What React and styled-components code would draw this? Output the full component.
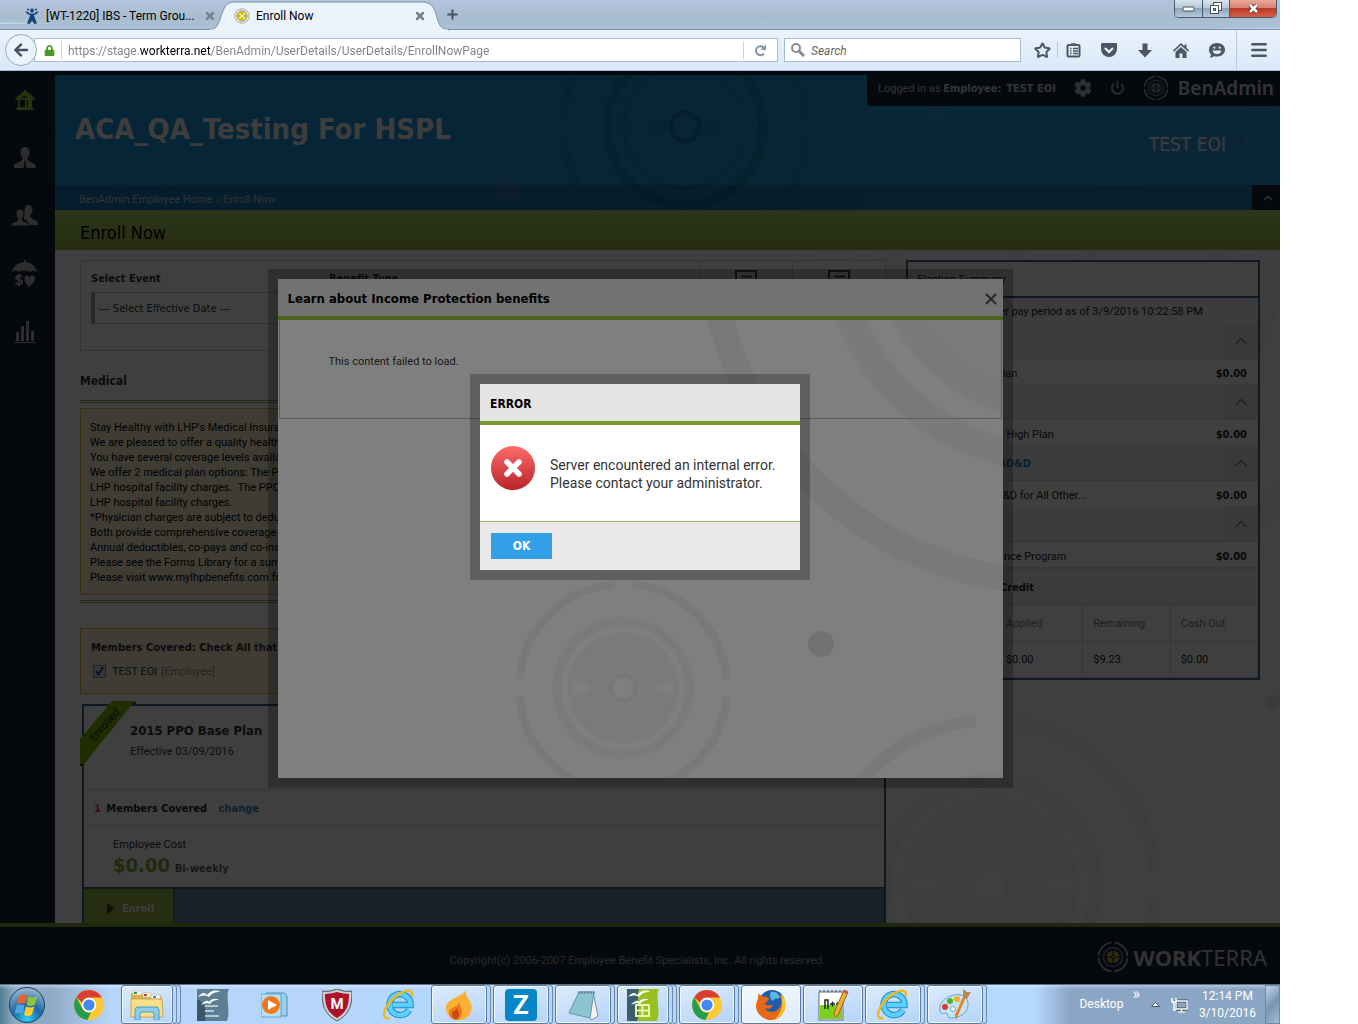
import styled, { createGlobalStyle, css } from "styled-components";
import { ChevronUp, Star, X, Plus, Menu, Power } from "lucide-react";
import { FaCog, FaArrowLeft, FaLock } from "react-icons/fa";

const textFont = `Roboto, "Noto Sans", sans-serif`;
const boldFont = `"DejaVu Sans Condensed", "Noto Sans", sans-serif`;

const GlobalStyle = createGlobalStyle`
  *, *::before, *::after { box-sizing: border-box; }
  body { margin: 0; background: #fff; font: 11px/15px ${textFont}; color: #333; }
  h1, h2, h3, p { margin: 0; font-size: inherit; }
  b, strong { font-family: ${boldFont}; }
  button, input, select { font: inherit; color: inherit; margin: 0; }
  button { border: 0; padding: 0; background: none; cursor: pointer; }
  a { color: inherit; text-decoration: none; }
  svg { display: block; flex: none; }
`;

/* ---------- artwork ---------- */

const Target = ({ cx, cy, r }) => {
  const ring = r * 0.963;
  const arc = ring * Math.PI * 0.5;
  const gap = r * 0.17;
  return (
    <g transform={`translate(${cx} ${cy})`} fill="none" stroke="#000">
      <circle
        r={ring}
        strokeWidth={r * 0.074}
        strokeOpacity="0.05"
        strokeDasharray={`${arc - gap} ${gap}`}
        strokeDashoffset={-gap / 2}
      />
      <circle r={r * 0.615} strokeWidth={r * 0.082} strokeOpacity="0.04" />
      <circle r={r * 0.47} strokeWidth={r * 0.085} strokeOpacity="0.045" />
      <circle r={r * 0.27} strokeWidth={r * 0.32} strokeOpacity="0.03" />
      <circle r={r * 0.11} strokeWidth={r * 0.045} strokeOpacity="0.04" />
      <g stroke="none" fill="#fff">
        <rect x={-r * 0.466} y={-r * 0.037} width={r * 0.15} height={r * 0.074} fillOpacity="0.8" />
        <rect x={r * 0.33} y={-r * 0.037} width={r * 0.15} height={r * 0.074} fillOpacity="0.8" />
        <rect x={-r * 0.04} y={-r * 0.66} width={r * 0.08} height={r * 0.53} fillOpacity="0.3" />
        <rect x={-r * 0.04} y={r * 0.13} width={r * 0.08} height={r * 0.53} fillOpacity="0.3" />
      </g>
    </g>
  );
};

const Artwork = ({ x, y, opacity }) => (
  <ArtSvg viewBox={`${x} ${y} 1280 1024`} opacity={opacity} aria-hidden="true">
    <Target cx={1055} cy={238} r={357} />
    <Target cx={990} cy={886} r={172} />
    <Target cx={623} cy={688} r={108} />
    <circle cx="821" cy="644" r="13" fillOpacity="0.1" />
    <circle cx="1273" cy="702" r="7" fillOpacity="0.1" />
  </ArtSvg>
);

const HeaderArt = () => (
  <ArtSvg viewBox="55 75 1280 1024" aria-hidden="true">
    <g fill="none" stroke="#000">
      <circle cx="685" cy="127" r="14" strokeWidth="5" strokeOpacity="0.18" />
      <circle cx="685" cy="127" r="61" strokeWidth="5" strokeOpacity="0.05" />
      <circle cx="685" cy="127" r="78" strokeWidth="10" strokeOpacity="0.12" />
      <circle
        cx="685"
        cy="127"
        r="122"
        strokeWidth="9"
        strokeOpacity="0.05"
        strokeDasharray="172 20"
        strokeDashoffset="-10"
      />
      <path d="M646 127h22M702 127h24" strokeWidth="8" strokeOpacity="0.06" />
    </g>
    <g fill="#fff" fillOpacity="0.06">
      <circle cx="373" cy="102" r="7" />
      <circle cx="228" cy="160" r="7" />
      <circle cx="937" cy="109" r="13" />
      <circle cx="508" cy="190" r="13" fill="#ffb070" fillOpacity="0.12" />
    </g>
  </ArtSvg>
);

const ArtSvg = styled.svg`
  position: absolute;
  top: 0;
  left: 0;
  width: 1280px;
  height: 1024px;
`;

const LogoMark = ({ size, core }) => (
  <svg width={size} height={size} viewBox="0 0 32 32" fill="none" stroke="#b8bcc0">
    <circle cx="16" cy="16" r="14.5" strokeWidth="1.6" strokeDasharray="19.8 3" strokeDashoffset="-1.5" />
    <circle cx="16" cy="16" r="9.5" strokeWidth="1.4" strokeOpacity="0.7" />
    <circle cx="16" cy="16" r="6.5" fill={core} stroke="none" />
    <path d="M16 9v5M16 18v5M9 16h5M18 16h5" stroke="#1a2430" strokeWidth="1.2" />
    <circle cx="16" cy="16" r="1.600" stroke="#1a2430" />
  </svg>
);

/* ---------- browser chrome ---------- */

const Desktop = styled.div`
  display: flex;
  flex-direction: column;
  height: 100vh;
  margin-right: 78px;
  overflow: hidden;
`;

const TabStrip = styled.div`
  display: flex;
  height: 30px;
  background: radial-gradient(ellipse at 0 80%, #c9e6f6 0, transparent 60px),
    radial-gradient(ellipse at 100% 100%, #c4e2f2 0, transparent 80px),
    linear-gradient(#b3c5dd, #a8bccf 60%, #adc1d6);
  border-bottom: 1px solid #7890a8;
  font: 12px/16px ${textFont};
  color: #000;
`;

const Tab = styled.div`
  position: relative;
  display: flex;
  align-items: center;
  gap: 6px;
  width: ${(p) => (p.$active ? 212 : 224)}px;
  height: 31px;
  padding: ${(p) => (p.$active ? "0 10px 0 10px" : "0 8px 0 24px")};
`;

const TabShape = styled.svg`
  position: absolute;
  top: 0;
  left: -14px;
`;

const TabTitle = styled.span`
  position: relative;
  flex: 1;
  white-space: nowrap;
`;

const TabButton = styled.button`
  position: relative;
  color: #76838f;
`;

const NewTab = styled.button`
  margin-left: 9px;
  color: #45515e;
`;

const WindowControls = styled.div`
  display: flex;
  height: 18px;
  margin: 0 3px 0 auto;
  border: 1px solid #4a5a6c;
  border-top: 0;
  border-radius: 0 0 5px 5px;
  overflow: hidden;
`;

const WindowButton = styled.button`
  display: grid;
  place-items: center;
  width: ${(p) => (p.$close ? 47 : 27)}px;
  background: ${(p) =>
    p.$close
      ? "linear-gradient(#e9a99b 0, #d88373 45%, #bb3a22 50%, #d4604a)"
      : "linear-gradient(#d8e3ee 0, #b8c9da 45%, #8fa6bd 50%, #b3c9dd)"};
  & + & {
    border-left: 1px solid #4a5a6c;
  }
`;

const NavBar = styled.div`
  display: flex;
  align-items: center;
  height: 41px;
  padding: 0 11px 0 5px;
  background: linear-gradient(#eaf3fc, #dae8f8);
  border-bottom: 1px solid #a4bcd0;
  font: 12px/16px ${textFont};
`;

const BackButton = styled.button`
  position: relative;
  display: grid;
  place-items: center;
  width: 32px;
  height: 32px;
  margin-right: -3px;
  border: 1px solid #98abbe;
  border-radius: 50%;
  background: #eaf3fc;
  color: #45505c;
`;

const FieldBox = styled.div`
  display: flex;
  align-items: center;
  gap: 6px;
  flex: ${(p) => (p.$grow ? "1" : "0 0 237px")};
  height: 24px;
  margin-right: 6px;
  padding: 0 ${(p) => (p.$grow ? "10px 0 9px" : "6px")};
  border: 1px solid #a8bccf;
  background: #fff;
  color: #8c98a6;
`;

const FieldRule = styled.span`
  width: 1px;
  height: 18px;
  margin-right: ${(p) => (p.$wide ? 4 : 0)}px;
  background: #ccd3da;
`;

// host name is darker than the rest of the address
const AddressInput = styled.input`
  flex: 1;
  min-width: 0;
  padding: 2px 0 0;
  border: 0;
  outline: 0;
  background: linear-gradient(90deg, #808080 71px, #000 71px, #000 143px, #808080 143px);
  background-clip: text;
  -webkit-text-fill-color: transparent;
`;

const SearchInput = styled.input`
  flex: 1;
  min-width: 0;
  padding: 2px 0 0;
  border: 0;
  outline: 0;
  &::placeholder {
    color: #666;
    opacity: 1;
    font-style: italic;
  }
`;

const ToolGroup = styled.div`
  display: flex;
  align-items: center;
  gap: 16px;
  margin-left: 5px;
  color: #4d5763;
`;

const ToolButton = styled.button`
  display: grid;
  place-items: center;
  width: 20px;
  height: 24px;
`;

const ToolRule = styled.span`
  width: 1px;
  height: ${(p) => p.$h}px;
  margin: ${(p) => p.$m};
  background: #b7c8da;
`;

const BrowserChrome = () => (
  <header>
    <TabStrip>
      <Tab>
        <svg width="16" height="16" viewBox="0 0 16 16" fill="#17457a">
          <circle cx="8" cy="2.6" r="2" />
          <circle cx="4.2" cy="1.6" r="1" />
          <circle cx="11.8" cy="1.6" r="1" />
          <path d="M1.6 3.2c.8 2.6 2.7 3.6 4.6 3.9L3 15.7h3l2-3 2 3h3L9.800 7.100c1.900-.3 3.800-1.300 4.600-3.900l-2 .2C11.400 5 9.700 5.600 8 5.600S4.600 5 3.600 3.400z" />
        </svg>
        <TabTitle>[WT-1220] IBS - Term Grou...</TabTitle>
        <TabButton aria-label="Close tab">
          <X size={12} strokeWidth={5} />
        </TabButton>
      </Tab>
      <Tab $active>
        <TabShape width="240" height="31" viewBox="0 0 240 31">
          <path
            d="M0 29.500C14 29.500 8 2 24 2H212C232 2 222 29.500 238 29.500V31H0z"
            fill="#ebf3fc"
            stroke="#7890a8"
          />
          <path d="M0 30.500H238" stroke="#ebf3fc" strokeWidth="2" />
        </TabShape>
        <svg width="16" height="16" viewBox="0 0 16 16" style={{ position: "relative" }}>
          <circle cx="8" cy="8" r="7.200" fill="#eee" stroke="#aaa" />
          <circle cx="8" cy="8" r="5" fill="#f0e22a" stroke="#888" />
          <path d="M8 4v8M4 8h8" stroke="#8a7f20" />
          <circle cx="8" cy="8" r="1.800" fill="#fff6a0" />
        </svg>
        <TabTitle>Enroll Now</TabTitle>
        <TabButton aria-label="Close tab">
          <X size={12} strokeWidth={5} />
        </TabButton>
      </Tab>
      <NewTab aria-label="New tab">
        <Plus size={15} strokeWidth={3} />
      </NewTab>
      <WindowControls>
        <WindowButton aria-label="Minimize">
          <svg width="13" height="6">
            <rect x="1" y="1" width="11" height="4" rx="1" fill="#fff" stroke="#48525e" />
          </svg>
        </WindowButton>
        <WindowButton aria-label="Restore">
          <svg width="12" height="13" fill="#fff" stroke="#48525e">
            <rect x="3.500" y="0.500" width="8" height="8" />
            <rect x="0.500" y="3.500" width="8" height="8" />
            <rect x="3.500" y="6.500" width="2" height="2" fill="#8fa6bd" />
          </svg>
        </WindowButton>
        <WindowButton $close aria-label="Close">
          <svg width="13" height="11" fill="none">
            <path d="M3 2l7 7M10 2L3 9" stroke="#553038" strokeWidth="4.500" />
            <path d="M3 2l7 7M10 2L3 9" stroke="#fff" strokeWidth="2.600" />
          </svg>
        </WindowButton>
      </WindowControls>
    </TabStrip>
    <NavBar>
      <BackButton aria-label="Back">
        <FaArrowLeft size={16} />
      </BackButton>
      <FieldBox $grow>
        <FaLock size={11} color="#4a9a26" />
        <FieldRule />
        <AddressInput
          aria-label="Address"
          defaultValue="https://stage.workterra.net/BenAdmin/UserDetails/UserDetails/EnrollNowPage"
        />
        <FieldRule $wide />
        <svg width="13" height="13" viewBox="0 0 13 13" fill="none" stroke="#8796a8" strokeWidth="2">
          <path d="M10 9.500A4.500 4.500 0 1 1 9.500 3.300" />
          <path d="M12 0.500V6H6.500z" fill="#8796a8" stroke="none" />
        </svg>
      </FieldBox>
      <FieldBox>
        <svg width="14" height="14" viewBox="0 0 14 14" fill="none" stroke="#8b8b8b">
          <circle cx="5" cy="5" r="4" strokeWidth="2" />
          <path d="M8 8l5 5" strokeWidth="3" />
        </svg>
        <SearchInput aria-label="Search" placeholder="Search" />
      </FieldBox>
      <ToolGroup>
        <ToolButton aria-label="Bookmark">
          <Star size={17} strokeWidth={2.800} />
        </ToolButton>
        <ToolRule $h={16} $m="0 -11px 0 -11px" />
        <ToolButton aria-label="Bookmarks list">
          <svg width="15" height="16" viewBox="0 0 15 16" fill="none" stroke="#4d5763" strokeWidth="2">
            <rect x="1.500" y="3" width="12" height="11.500" rx="1" />
            <path d="M5 2h5M4 6.500h1.500M7 6.500h5M4 9h1.500M7 9h5M4 11.500h1.500M7 11.500h5" strokeWidth="1.500" />
          </svg>
        </ToolButton>
        <ToolButton aria-label="Pocket">
          <svg width="16" height="14" viewBox="0 0 16 14">
            <path d="M1 0h14a1 1 0 0 1 1 1v5a8 8 0 0 1-16 0V1a1 1 0 0 1 1-1z" fill="#4d5763" />
            <path d="M4 5l4 4 4-4" fill="none" stroke="#fff" strokeWidth="2" />
          </svg>
        </ToolButton>
        <ToolButton aria-label="Downloads">
          <svg width="14" height="15" viewBox="0 0 14 15" fill="#4d5763">
            <path d="M4.500 0.500h5V7H14l-7 7.500L0 7h4.500z" />
          </svg>
        </ToolButton>
        <ToolButton aria-label="Home">
          <svg width="16" height="15" viewBox="0 0 16 15" fill="#4d5763">
            <path d="M8 0L0 7.500l1 1.200L8 2.300l7 6.400 1-1.200-2.500-2.400V1.500h-2v1.700z" />
            <path d="M8 4L2.500 9v6h4v-4.500h3V15h4V9z" />
          </svg>
        </ToolButton>
        <ToolButton aria-label="Chat">
          <svg width="16" height="15" viewBox="0 0 16 15">
            <path d="M8 0c4.600 0 8 2.800 8 6.700s-3.400 6.800-8 6.800c-1 0-1.800-.1-2.600-.3L1 15l1-3.500C.7 10.300 0 8.700 0 6.700 0 2.800 3.400 0 8 0z" fill="#4d5763" />
            <circle cx="5.300" cy="4.700" r="1.100" fill="#e4eefa" />
            <circle cx="10.700" cy="4.700" r="1.100" fill="#e4eefa" />
            <path d="M3.500 7.500h9c-.5 2.500-2.200 3.500-4.500 3.500s-4-1-4.500-3.500z" fill="#e4eefa" />
          </svg>
        </ToolButton>
        <ToolRule $h={38} $m="0 -4px 0 -7px" />
        <ToolButton aria-label="Menu">
          <Menu size={20} strokeWidth={3} />
        </ToolButton>
      </ToolGroup>
    </NavBar>
  </header>
);

/* ---------- application page ---------- */

const Viewport = styled.div`
  position: relative;
  display: flex;
  flex-direction: column;
  flex: 1;
  min-height: 0;
  background: #14243a;
`;

const PageBody = styled.div`
  display: flex;
  flex: 1;
  min-height: 0;
  overflow: hidden;
`;

const SideNav = styled.nav`
  width: 55px;
  background: #14243a;
`;

const SideLink = styled.a`
  display: grid;
  place-items: center;
  height: 58px;
  padding-right: 6px;
  border-bottom: 1px solid #0a1422;
`;

const Main = styled.main`
  position: relative;
  display: flex;
  flex-direction: column;
  flex: 1;
  min-width: 0;
  padding-top: 4px;
`;

const Banner = styled.header`
  position: relative;
  height: 135px;
  overflow: hidden;
  background: linear-gradient(90deg, #1894d8, #2a9adc);
`;

const BannerContent = styled.div`
  position: relative;
  display: flex;
  flex-direction: column;
  height: 100%;
`;

const LoginBar = styled.div`
  display: flex;
  align-items: center;
  align-self: flex-end;
  height: 31px;
  padding: 0 6px 6px 11px;
  border-radius: 0 0 0 4px;
  background: #14243a;
  color: #cfd2d6;
`;

const LoginText = styled.span`
  margin-right: 18px;
  padding-top: 2px;
  b + b {
    margin-left: 2px;
  }
`;

const IconButton = styled.button`
  margin-right: 18px;
  color: #bfc3c8;
`;

const ProductName = styled.span`
  margin-left: 9px;
  font: 600 19px/24px "Noto Sans", sans-serif;
`;

const BannerTitles = styled.div`
  display: flex;
  justify-content: space-between;
  flex: 1;
  padding: 6px 36px 0 20px;
  color: #f4f4f4;
`;

const CompanyName = styled.h1`
  font: bold 29px/34px ${boldFont};
`;

const PersonName = styled.h2`
  display: flex;
  align-items: flex-start;
  gap: 5px;
  padding-top: 14px;
  font: 19px/36px ${boldFont};
`;

const InfoDot = styled.i`
  width: 13px;
  height: 13px;
  margin-top: 9px;
  border-radius: 50%;
  background: #2d8ccc;
`;

const Crumbs = styled.nav`
  display: flex;
  justify-content: space-between;
  height: 25px;
  padding-left: 24px;
  background: rgba(0, 20, 40, 0.22);
  color: #c6cdd4;
  line-height: 29px;
  i {
    color: #9cb43a;
    font-style: normal;
  }
`;

const CollapseButton = styled.button`
  display: grid;
  place-items: center;
  width: 28px;
  padding-left: 4px;
  background: #14243a;
  color: #c6cdd4;
`;

const PageTitle = styled.h2`
  height: 40px;
  padding-left: 25px;
  background: linear-gradient(#b4d46c, #98b440);
  color: #000;
  font: 18px/45px ${boldFont};
`;

const Content = styled.div`
  position: relative;
  display: grid;
  grid-template-columns: 1fr 354px;
  align-items: start;
  gap: 20px;
  flex: 1;
  min-height: 0;
  padding: 10px 20px 0 25px;
  overflow: hidden;
  background: #fff;
`;

const Column = styled.section`
  position: relative;
  min-width: 0;
`;

const EventPanel = styled.div`
  display: grid;
  grid-template-columns: 238px 1fr 93px 93px;
  height: 91px;
  border: 1px solid #d0d0d0;
  background: #fff;
`;

const EventCell = styled.div`
  display: flex;
  flex-direction: column;
  align-items: ${(p) => (p.$divided ? "center" : "stretch")};
  padding: 10px;
  ${(p) => p.$divided && "border-left: 1px solid #d0d0d0; padding-top: 9px;"}
  label {
    margin-bottom: 6px;
    font-family: ${boldFont};
    font-weight: bold;
  }
`;

const EventSelect = styled.select`
  width: 220px;
  height: 32px;
  padding: 0 4px;
  border: 1px solid #c4c8cc;
  border-left: 4px solid #a0a4a8;
  border-radius: 0;
  background: #fff;
  appearance: none;
  font-family: ${boldFont};
`;

const SectionTitle = styled.h3`
  padding: 22px 0 11px;
  font: bold 12px/16px ${boldFont};
`;

const DoubleRule = styled.hr`
  height: 3px;
  margin: 0 0 5px;
  border: 0;
  background: linear-gradient(#84ac24 1px, #fff 1px, #fff 2px, #84ac24 2px);
`;

const noticeBox = css`
  border: 1px solid #e4b43c;
  background: #fcf3d2;
  padding: 11px 10px;
`;

const Notice = styled.div`
  ${noticeBox}
  height: 187px;
  margin-bottom: 5px;
  padding-left: 9px;
  color: #000;
  white-space: pre;
  overflow: hidden;
`;

const MembersBox = styled.div`
  ${noticeBox}
  height: 66px;
  margin-top: 25px;
  h3 {
    margin-bottom: 8px;
    font: bold 11px/16px ${boldFont};
  }
  label {
    display: flex;
    align-items: center;
    gap: 6px;
  }
  em {
    margin-left: -2px;
    color: #8c8c8c;
    font-style: normal;
  }
  input {
    width: 13px;
    height: 13px;
    margin-left: 2px;
    border: 1px solid #8090a8;
    background: #e4ecf8;
    appearance: none;
  }
  input:checked {
    background: #e4ecf8
      linear-gradient(#e4ecf8, #c8d4e8);
  }
`;

const CheckWrap = styled.span`
  position: relative;
  display: flex;
  svg {
    position: absolute;
    top: 1px;
    left: 4px;
    pointer-events: none;
  }
`;

const PlanCard = styled.article`
  position: relative;
  margin: 10px 0 0 2px;
  border: 2px solid #3c5c84;
  background: #fff;
`;

const Ribbon = styled.svg`
  position: absolute;
  top: -6px;
  left: -4px;
`;

const PlanHead = styled.div`
  height: 83px;
  padding: 15px 0 0 46px;
  h3 {
    font: bold 13px/20px ${boldFont};
  }
  p {
    line-height: 22px;
  }
`;

const PlanRow = styled.div`
  height: 37px;
  padding: 11px 10px;
  border: solid #d4d4d4;
  border-width: 1px 0;
  color: #222;
  font: bold 11px/15px ${boldFont};
  span {
    margin-right: 2px;
    color: #e03c3c;
  }
  a {
    margin-left: 8px;
    color: #1f88c0;
  }
`;

const PlanCost = styled.div`
  height: 61px;
  padding: 11px 29px;
  b {
    margin-left: 2px;
    color: #666;
  }
  strong {
    color: #86a82c;
    font-size: 20px;
    line-height: 26px;
  }
`;

const PlanActions = styled.div`
  height: 60px;
  border-top: 2px solid #3c5c84;
  background: #6480a4;
`;

const EnrollButton = styled.button`
  display: flex;
  align-items: center;
  gap: 7px;
  width: 90px;
  height: 38px;
  padding-left: 23px;
  border-right: 1px solid #3c5c84;
  background: #98b440;
  color: #f4f4f4;
  font-family: ${boldFont};
  font-weight: bold;
`;

const Summary = styled.section`
  position: relative;
  border: 2px solid #3c5c84;
  background: #fff;
  color: #222;
`;

const SummaryTitle = styled.h3`
  height: 36px;
  padding: 10px 9px;
  border-bottom: 2px solid #3c5c84;
  font-weight: normal;
`;

const SummaryLine = styled.div`
  display: flex;
  justify-content: space-between;
  height: 25px;
  padding: 0 11px 0 9px;
  background: ${(p) => (p.$shade ? "#f0f0f0" : "#fff")};
  line-height: ${(p) => (p.$shade ? 27 : 30)}px;
`;

const Category = styled.div`
  display: flex;
  justify-content: space-between;
  height: 36px;
  border: solid #d8d8d8;
  border-width: 0 0 1px;
  background: #f0f0f0;
  a {
    padding-left: 9px;
    color: #1f88c0;
    font: bold 11px/38px ${boldFont};
  }
  button {
    display: grid;
    place-items: center;
    width: 35px;
    background: #e4e4e4;
  }
`;

const CreditTitle = styled.h3`
  height: 38px;
  padding-left: 9px;
  border: solid #d8d8d8;
  border-width: 2px 0 1px;
  background: #f0f0f0;
  font: bold 11px/38px ${boldFont};
`;

const CreditTable = styled.table`
  width: 100%;
  border-collapse: collapse;
  table-layout: fixed;
  th,
  td {
    height: 36px;
    padding: 1px 10px 0;
    border: solid #d8d8d8;
    border-width: 0 1px 1px 0;
    text-align: left;
    font-weight: normal;
  }
  th {
    color: #808080;
  }
`;

const Footer = styled.footer`
  display: grid;
  grid-template-columns: 1fr auto 1fr;
  align-items: center;
  height: 61px;
  padding: 10px 13px 0 8px;
  border-top: 4px solid #80a030;
  background: #14243a;
  color: #a0a4a8;
  p {
    grid-column: 2;
  }
`;

const Brand = styled.div`
  display: flex;
  align-items: center;
  justify-content: flex-end;
  gap: 5px;
  margin-top: -8px;
  font: 22px/24px "Noto Sans", sans-serif;
  color: #c8c8c8;
  b {
    font-family: "Noto Sans", sans-serif;
  }
`;

const sideIcons = [
  {
    name: "Home",
    art: (
      <svg width="20" height="20" viewBox="0 0 20 20" fill="#a0c040">
        <path d="M10 0L0.500 8v2H3v7.500H1.500V20h17v-2.500H17V10h2.500V8L15 4z" />
        <path d="M5 10h5v7H5zM7.500 6.500h4v1.500h-4zM12 10h1v7h-1z" fill="#14243a" />
      </svg>
    ),
  },
  {
    name: "Employee",
    art: (
      <svg width="22" height="21" viewBox="0 0 22 21" fill="#b4b4b4">
        <path d="M11 0c3 0 4.500 2 4.500 5 0 3-1 5-2.500 6.500l1.500 2.500 7 3.500V21H0v-3.500l7-3.500 2-2.500C7.500 10 6.500 8 6.500 5c0-3 1.500-5 4.500-5z" />
        <path d="M10 14h2l-.5 2 1 5h-3l1-5z" fill="#14243a" />
      </svg>
    ),
  },
  {
    name: "Dependents",
    art: (
      <svg width="27" height="21" viewBox="0 0 27 21" fill="#b4b4b4">
        <path d="M17 0c3 0 4.500 2 4.500 4.500s-1 4-2.500 5.500l1 3 7 4V20h-9l-1-3-4-3 .5-9C14 2 15 0 17 0z" />
        <path d="M9 4c2.700 0 4 2 4 4.500 0 2.300-.8 4-2 5.500l1 2 6 2.500V21H0v-2.500L6 16l1-2c-1.200-1.500-2-3.200-2-5.500C5 6 6.300 4 9 4z" stroke="#14243a" />
      </svg>
    ),
  },
  {
    name: "Benefits",
    art: (
      <svg width="25" height="28" viewBox="0 0 25 28" fill="#b4b4b4">
        <path d="M12 0h1.500v2C19 2.500 23.500 6 25 12c-2.500-2-5-2-7 0-3-2-8-2-11 0-2-2-4.500-2-7 0C1.500 6 6 2.500 12 2z" />
        <path d="M17 18c1-4 6-3.500 6 .500 0 3.500-3.500 5.500-6 8.500-2.500-3-4.500-5-4.500-8.500 0-3.500 3.500-4 4.500-.500z" />
        <path d="M10 17c-1-1.500-6-2-6 .700 0 2.800 6 1.300 6 4.300 0 2.700-5.500 2.300-6.500.500M7 13.500v13" fill="none" stroke="#b4b4b4" strokeWidth="2" />
      </svg>
    ),
  },
  {
    name: "Reports",
    art: (
      <svg width="22" height="22" viewBox="0 0 22 22" fill="#b4b4b4">
        <path d="M2 11h3v9H2zM7 5h3v15H7zM12 0h3v20h-3zM17 10h3v10h-3zM0 21h22v1H0z" />
      </svg>
    ),
  },
];

const noticeText = `Stay Healthy with LHP's Medical Insurance Plans
We are pleased to offer a quality healthcare program
You have several coverage levels available to you.
We offer 2 medical plan options: The PPO Base Plan and
LHP hospital facility charges.  The PPO Plus Plan covers
LHP hospital facility charges.
*Physician charges are subject to deductible.
Both provide comprehensive coverage and benefits.
Annual deductibles, co-pays and co-insurance apply.
Please see the Forms Library for a summary of benefits.
Please visit www.mylhpbenefits.com for more details.`;

const elections = [
  { category: "Medical", plan: "2015 PPO Base Plan", cost: "$0.00" },
  { category: "Dental", plan: "2015 Delta Dental High Plan", cost: "$0.00" },
  { category: "Basic Life and AD&D", plan: "Basic Life and AD&D for All Other...", cost: "$0.00" },
  { category: "EAP", plan: "Employee Assistance Program", cost: "$0.00" },
];

const BoxIcon = () => (
  <svg width="22" height="22" viewBox="0 0 22 22" fill="none" stroke="#3c5468" strokeWidth="2">
    <rect x="1" y="1" width="20" height="20" />
    <path d="M6 6.500h11" />
  </svg>
);

const EmployeePage = () => (
  <PageBody>
    <SideNav>
      {sideIcons.map((item) => (
        <SideLink key={item.name} href="#" aria-label={item.name}>
          {item.art}
        </SideLink>
      ))}
    </SideNav>
    <Main>
      <Banner>
        <HeaderArt />
        <BannerContent>
          <LoginBar>
            <LoginText>
              Logged in as <b>Employee:</b> <b>TEST EOI</b>
            </LoginText>
            <IconButton aria-label="Settings">
              <FaCog size={18} />
            </IconButton>
            <IconButton aria-label="Log out">
              <Power size={15} strokeWidth={2.500} />
            </IconButton>
            <LogoMark size={26} core="#7c9c8c" />
            <ProductName>BenAdmin</ProductName>
          </LoginBar>
          <BannerTitles>
            <CompanyName>ACA_QA_Testing For HSPL</CompanyName>
            <PersonName>
              TEST EOI <InfoDot />
            </PersonName>
          </BannerTitles>
          <Crumbs>
            <span>
              <a href="#">BenAdmin Employee Home</a> <i>»</i> Enroll Now
            </span>
            <CollapseButton aria-label="Collapse header">
              <ChevronUp size={14} strokeWidth={2} />
            </CollapseButton>
          </Crumbs>
        </BannerContent>
      </Banner>
      <PageTitle>Enroll Now</PageTitle>
      <Content>
        <Artwork x={55} y={250} opacity={0.8} />
        <Column>
          <EventPanel>
            <EventCell>
              <label htmlFor="event">Select Event</label>
              <EventSelect id="event">
                <option>--- Select Effective Date ---</option>
              </EventSelect>
            </EventCell>
            <EventCell>
              <label htmlFor="benefit">Benefit Type</label>
              <EventSelect id="benefit">
                <option>Medical</option>
              </EventSelect>
            </EventCell>
            <EventCell $divided>
              <BoxIcon />
            </EventCell>
            <EventCell $divided>
              <BoxIcon />
            </EventCell>
          </EventPanel>
          <SectionTitle>Medical</SectionTitle>
          <DoubleRule />
          <Notice>{noticeText}</Notice>
          <DoubleRule />
          <MembersBox>
            <h3>Members Covered: Check All that Apply</h3>
            <label>
              <CheckWrap>
                <input type="checkbox" defaultChecked />
                <svg width="9" height="10" fill="none" stroke="#2c4484" strokeWidth="2">
                  <path d="M1 5l2.500 3.500L8 1" />
                </svg>
              </CheckWrap>
              TEST EOI <em>[Employee]</em>
            </label>
          </MembersBox>
          <PlanCard>
            <Ribbon width="58" height="66" viewBox="80 700 58 66">
              <path d="M130 701h5l1 3h-5zM80 763h3v3h-3z" fill="#2c3c10" />
              <path d="M80 739L112 701h23L84 764h-4z" fill="#7cb400" />
              <text x="0" y="0" transform="translate(94 742) rotate(-48)" fontSize="11" fill="#222">
                Enrolled
              </text>
            </Ribbon>
            <PlanHead>
              <h3>2015 PPO Base Plan</h3>
              <p>Effective 03/09/2016</p>
            </PlanHead>
            <PlanRow>
              <span>1</span> Members Covered <a href="#">change</a>
            </PlanRow>
            <PlanCost>
              <p>Employee Cost</p>
              <strong>$0.00</strong> <b>Bi-weekly</b>
            </PlanCost>
            <PlanActions>
              <EnrollButton>
                <svg width="8" height="11" fill="#3c4c1c">
                  <path d="M0 0l8 5.500L0 11z" />
                </svg>
                Enroll
              </EnrollButton>
            </PlanActions>
          </PlanCard>
        </Column>
        <Summary>
          <SummaryTitle>Election Summary</SummaryTitle>
          <SummaryLine $shade>Employee Cost per pay period as of 3/9/2016 10:22:58 PM</SummaryLine>
          {elections.map((item) => (
            <div key={item.category}>
              <Category>
                <a href="#">{item.category}</a>
                <button aria-label={`Collapse ${item.category}`}>
                  <ChevronUp size={20} strokeWidth={1.200} />
                </button>
              </Category>
              <SummaryLine>
                <span>{item.plan}</span>
                <b>{item.cost}</b>
              </SummaryLine>
            </div>
          ))}
          <CreditTitle>Company Plan Credit</CreditTitle>
          <CreditTable>
            <thead>
              <tr>
                <th>Amount</th>
                <th>Applied</th>
                <th>Remaining</th>
                <th>Cash Out</th>
              </tr>
            </thead>
            <tbody>
              <tr>
                <td>$9.23</td>
                <td>$0.00</td>
                <td>$9.23</td>
                <td>$0.00</td>
              </tr>
            </tbody>
          </CreditTable>
        </Summary>
      </Content>
    </Main>
  </PageBody>
);

/* ---------- dialogs ---------- */

const Backdrop = styled.div`
  position: absolute;
  inset: 0;
  display: flex;
  justify-content: center;
  align-items: ${(p) => (p.$top ? "flex-start" : "center")};
  padding-top: ${(p) => p.$top || 2}px;
  background: rgba(0, 0, 0, 0.5);
`;

const DialogFrame = styled.div`
  width: ${(p) => p.$width}px;
  padding: 10px;
  background: rgba(0, 0, 0, 0.25);
`;

const DialogBox = styled.section`
  position: relative;
  min-height: ${(p) => p.$minHeight || 0}px;
  overflow: hidden;
  background: #fff;
`;

const DialogHeader = styled.header`
  position: relative;
  display: flex;
  align-items: center;
  justify-content: space-between;
  height: 41px;
  padding: 2px 3px 0 10px;
  border-bottom: 4px solid ${(p) => p.$line};
  background: #e4e4e4;
  color: #000;
  h2 {
    font: bold ${(p) => p.$size}px/18px ${boldFont};
  }
`;

const LearnBody = styled.div`
  position: relative;
  height: 99px;
  margin: 0 1px;
  padding: 34px 49px;
  border: 1px solid #b8b8b8;
  border-top: 0;
  color: #333;
`;

const ErrorBody = styled.div`
  display: flex;
  gap: 15px;
  height: 96px;
  padding: 21px 11px;
  color: #333;
  font: 14px/18px ${textFont};
  p {
    padding-top: 10px;
  }
`;

const ErrorFooter = styled.footer`
  padding: 11px;
  border-top: 1px solid #98bc5c;
  background: #e9e9e9;
`;

const OkButton = styled.button`
  display: block;
  width: 61px;
  height: 26px;
  background: #329fe8;
  color: #fff;
  font: bold 12px/26px ${boldFont};
`;

const ErrorIcon = () => (
  <svg width="44" height="45" viewBox="0 0 44 45">
    <defs>
      <linearGradient id="red" x1="0" y1="0" x2="0" y2="1">
        <stop offset="0" stopColor="#ff6a6a" />
        <stop offset="1" stopColor="#b92428" />
      </linearGradient>
    </defs>
    <circle cx="22" cy="22.500" r="22" fill="#ddd" />
    <circle cx="22" cy="22" r="22" fill="url(#red)" />
    <path d="M16 16l12 12M28 16L16 28" stroke="#fff" strokeWidth="5.500" strokeLinecap="round" />
  </svg>
);

/* ---------- taskbar ---------- */

const Taskbar = styled.footer`
  display: flex;
  height: 40px;
  border-top: 1px solid #5c7088;
  background: linear-gradient(rgba(255, 255, 255, 0.35), transparent 4px),
    linear-gradient(90deg, #4f7f93 0, #8fa9c0 14px, #8fa9c4 50px, #b5d5fb 110px, #b5d8fd 1035px, #8ba6c4 1070px);
  color: #fff;
  font: 12px/17px ${textFont};
`;

const StartButton = styled.button`
  display: grid;
  place-items: center;
  width: 59px;
  padding-right: 5px;
`;

const TaskSlot = styled.div`
  display: flex;
  width: 62px;
  padding-right: 2px;
`;

const TaskButton = styled.button`
  display: grid;
  place-items: center;
  flex: 1;
  ${(p) =>
    p.$framed &&
    css`
      border: 1px solid #5f7a98;
      border-radius: 3px;
      background: linear-gradient(160deg, ${p.$active ? "#f4f9ff, #dcebfd" : "#dcebfc, #b4d4f8"});
      box-shadow: inset 0 0 0 1px rgba(255, 255, 255, 0.7);
    `}
`;

const StackEdge = styled.i`
  width: 4px;
  border: 1px solid #6f8aa8;
  border-left: 0;
  border-radius: 0 3px 3px 0;
`;

const Tray = styled.div`
  display: flex;
  align-items: center;
  gap: 11px;
  margin-left: auto;
`;

const Clock = styled.time`
  text-align: center;
`;

const DesktopLabel = styled.span`
  margin-right: -2px;
`;

const MoreMark = styled.span`
  align-self: flex-start;
  font-size: 16px;
`;

const ShowDesktop = styled.button`
  align-self: stretch;
  width: 15px;
  margin-left: -2px;
  border: 1px solid #6e88a4;
  background: linear-gradient(135deg, #c4d6e8, #7894b4 50%, #a4bcd4);
`;

const ChromeIcon = () => (
  <svg width="30" height="30" viewBox="0 0 30 30">
    <circle cx="15" cy="15" r="15" fill="#fcc934" />
    <path d="M15 0a15 15 0 0 1 13 7.500H15a7.500 7.500 0 0 0-7 5L2.200 7.300A15 15 0 0 1 15 0z" fill="#d93c30" />
    <path d="M2.200 7.300L8.500 18.800a7.500 7.500 0 0 0 8.500 3.500L13.500 30A15 15 0 0 1 2.200 7.300z" fill="#2a9a4c" />
    <circle cx="15" cy="15" r="7.200" fill="#fff" />
    <circle cx="15" cy="15" r="5.600" fill="#4587f3" />
  </svg>
);

const ExplorerIcon = () => (
  <svg width="34" height="30" viewBox="0 0 34 30">
    <path d="M1 3h10l1 2h18l2 3v19H1z" fill="#d8b448" />
    <path d="M3 1h8v4H3zM13 3h8v4h-8zM21 5h9v4h-9z" fill="#fff" stroke="#b8a060" strokeWidth=".5" />
    <path d="M4 2h3v2H4z" fill="#2c9c3c" />
    <path d="M14 4h3v2h-3z" fill="#d03c3c" />
    <path d="M23 6h3v2h-3z" fill="#2c8cdc" />
    <path d="M1 9h31l1 18H1z" fill="#f6e08c" stroke="#c8a850" />
    <path d="M5 30v-10q0-3 3-3h18q3 0 3 3v10h-5v-6q0-2-2-2h-10q-2 0-2 2v6z" fill="#8ccdea" stroke="#4c9cc8" />
  </svg>
);

const Gulls = () => (
  <path d="M1 8c4-5 7-5 9-2 3-4 9-6 13-3-5 0-8 1-11 5-3-2-6-2-11 0zM4 16c4-5 7-5 8-3 3-4 6-4 10-2-5 0-7 1-9 4-3-1-5-1-9 1z" fill="#fff" />
);

const WriterIcon = () => (
  <svg width="32" height="32" viewBox="0 0 32 32">
    <path d="M0 0h32c-4 8 2 20-2 32H0z" fill="#5c7f94" />
    <path d="M0 10c8 4 10 12 8 22H0z" fill="#3c5668" />
    <Gulls />
    <path d="M8 17h13M8 22h9M8 27h14" stroke="#b4c8d4" strokeWidth="2" />
  </svg>
);

const MediaIcon = () => (
  <svg width="28" height="26" viewBox="0 0 28 26">
    <path d="M5 1h18l3 3v20H7z" fill="#9cd0ec" stroke="#4c94c0" />
    <path d="M0 2h20v23H0z" fill="#b8e0f4" stroke="#5ca4cc" />
    <circle cx="10" cy="13" r="9" fill="#f07818" />
    <path d="M7 8l9 5-9 5z" fill="#fff" />
  </svg>
);

const McAfeeIcon = () => (
  <svg width="30" height="32" viewBox="0 0 30 32">
    <path d="M0 2c5 1 10 0 15-2 5 2 10 3 15 2 0 14-2 23-15 30C2 25 0 16 0 2z" fill="#c8ccd4" stroke="#555" />
    <path d="M3 5c4 0 8-1 12-2 4 1 8 2 12 2 0 11-2 18-12 24C5 23 3 16 3 5z" fill="#b01028" />
    <text x="15" y="20" textAnchor="middle" fill="#fff" fontSize="15" fontWeight="bold">
      M
    </text>
  </svg>
);

const IeIcon = () => (
  <svg width="32" height="32" viewBox="0 0 32 32" fill="none">
    <path d="M26 21a10.500 10.500 0 1 1 1.500-5H9.500" stroke="#1c8ad0" strokeWidth="6.500" />
    <path d="M26 21a10.500 10.500 0 1 1 1.500-5H9.500" stroke="#5cd0f8" strokeWidth="4.500" />
    <path d="M6 29C-3 31 1 17 12 8 20 1 30-1 29 7" stroke="#f0b818" strokeWidth="2.500" />
  </svg>
);

const FlameIcon = () => (
  <svg width="26" height="32" viewBox="0 0 26 32">
    <path d="M21 0c-4 8 5 10 4.500 19C25 27 20 31 13 31S0 26 0 19C0 9 14 10 21 0z" fill="#fbb034" />
    <path d="M14 13c-1 4 2 6 2 10 0 4-2 8-6 8-5 0-7-4-7-8 0-5 8-4 11-10z" fill="#f07818" />
    <path d="M11 19c0 3 2 3 2 6 0 3-1 5-3 5s-4-2-4-5c0-3 4-3 5-6z" fill="#c84818" />
  </svg>
);

const ZIcon = () => (
  <svg width="32" height="32" viewBox="0 0 32 32">
    <rect width="32" height="32" rx="4" fill="#0486c8" />
    <text x="16" y="25" textAnchor="middle" fill="#fff" fontSize="26" fontWeight="bold">
      Z
    </text>
  </svg>
);

const NotepadIcon = () => (
  <svg width="32" height="30" viewBox="0 0 32 30">
    <path d="M26 2l5 24-6 4-3-3z" fill="#f4f4f0" stroke="#889" />
    <path d="M12 2h15l-4 26-21-5z" fill="#8cc4d0" stroke="#5c98a8" />
    <path d="M12 1v3M15 1v3M18 1v3M21 1v3M24 1v3M27 1v3" stroke="#667" />
  </svg>
);

const CalcIcon = () => (
  <svg width="32" height="32" viewBox="0 0 32 32">
    <path d="M0 0h32c-4 8 2 20-2 32H0z" fill="#98c020" />
    <path d="M0 0h12c-3 12 2 20-2 32H0z" fill="#3c5e6c" />
    <Gulls />
    <path d="M9 16h13v11H9zM15.500 16v11M9 21.500h13" fill="none" stroke="#e8f4b0" strokeWidth="2" />
  </svg>
);

const FirefoxIcon = () => (
  <svg width="32" height="32" viewBox="0 0 32 32">
    <circle cx="17" cy="14" r="13" fill="#1c5ca8" />
    <path d="M16 3c5-1 8 2 9 6-3 1-6 0-7 3-3-2-4-5-2-9z" fill="#5cb8e8" />
    <path d="M3 5c2 1 4 1 5 3 3-1 5 0 6 2-1 3-4 3-4 5 2 2 5 1 8 1-2 5-6 4-8 3 3 6 13 5 16-3 1-4 0-8-2-11 5 3 7 8 6 14-1 7-7 12-14 12S1 25 1 17C1 12 4 10 3 5z" fill="#e86818" />
    <path d="M26 5c4 4 6 9 4 15-2 6-6 9-10 10 6-5 9-14 6-25z" fill="#fcc42c" />
  </svg>
);

const NotepadPlusIcon = () => (
  <svg width="32" height="32" viewBox="0 0 32 32">
    <path d="M2 3h24v28H2z" fill="#fff" stroke="#667" />
    <path d="M3 16h22v14H3z" fill="#7cd020" />
    <path d="M3 3v-2M7 3V1M11 3V1M15 3V1M19 3V1M23 3V1" stroke="#444" />
    <path d="M8 20v-9h3v9M13 15h5M15.500 12.500v5M19 15h4M21 13v4" fill="none" stroke="#222" strokeWidth="1.500" />
    <path d="M27 1l4 2-10 23-3 2-1-4z" fill="#f0b030" stroke="#a06820" />
    <path d="M27 1l4 2-1 2-4-2z" fill="#d05050" />
  </svg>
);

const PaintIcon = () => (
  <svg width="32" height="32" viewBox="0 0 32 32">
    <path d="M15 6C24 4 30 9 29 17s-9 12-18 12c-3 0-1-5-4-5-2 0-5 2-6-2C-1 14 6 8 15 6z" fill="#c4e4f4" stroke="#6ca4c8" />
    <circle cx="6" cy="18" r="3" fill="#dc3c30" />
    <circle cx="11" cy="12" r="3" fill="#50b030" />
    <circle cx="18" cy="10" r="3" fill="#f4b020" />
    <circle cx="14" cy="20" r="2.500" fill="#fff" stroke="#6ca4c8" />
    <path d="M27 8L17 31l-1-5 8-18z" fill="#e88028" />
    <path d="M24 0l4 3 4 0-4 7-4-1z" fill="#b88850" />
  </svg>
);

const tasks = [
  { name: "Chrome", Icon: ChromeIcon },
  { name: "Explorer", Icon: ExplorerIcon, framed: true, stack: 2 },
  { name: "Writer", Icon: WriterIcon },
  { name: "Media Player", Icon: MediaIcon },
  { name: "McAfee", Icon: McAfeeIcon },
  { name: "Internet Explorer", Icon: IeIcon },
  { name: "Flame", Icon: FlameIcon, framed: true, stack: 1 },
  { name: "Z", Icon: ZIcon, framed: true, stack: 1 },
  { name: "Notepad", Icon: NotepadIcon, framed: true, stack: 1 },
  { name: "Calc", Icon: CalcIcon, framed: true, stack: 2 },
  { name: "Chrome window", Icon: ChromeIcon, framed: true, stack: 1 },
  { name: "Firefox", Icon: FirefoxIcon, framed: true, stack: 0, active: true },
  { name: "Notepad++", Icon: NotepadPlusIcon, framed: true, stack: 0 },
  { name: "Internet Explorer window", Icon: IeIcon, framed: true, stack: 1 },
  { name: "Paint", Icon: PaintIcon, framed: true, stack: 1 },
];

const WindowsTaskbar = () => (
  <Taskbar>
    <StartButton aria-label="Start">
      <svg width="36" height="36" viewBox="0 0 36 36">
        <defs>
          <radialGradient id="orb" cx="0.500" cy="0.900" r="0.900">
            <stop offset="0" stopColor="#30d0f8" />
            <stop offset="0.450" stopColor="#1868a4" />
            <stop offset="1" stopColor="#a0bcd4" />
          </radialGradient>
        </defs>
        <circle cx="18" cy="18" r="17.500" fill="url(#orb)" stroke="#1c3c5c" />
        <path d="M10 9c3-2 5-2 8-.500L16 17c-3-1.500-5-1.300-8 0z" fill="#ec6030" />
        <path d="M19.500 9.500c3 1.500 6 1.500 9-.500L26 17.500c-3 2-5.500 2-8.500.500z" fill="#90c43c" />
        <path d="M7.500 18.500c3-1.500 5-1.500 8 0L13.500 27c-3-1.500-5-1.500-8 0z" fill="#4ca4e0" />
        <path d="M17 19.500c3 1.500 5.500 1.500 8.500-.5L23 27.500c-3 2-5 2-8 .5z" fill="#fccc30" />
      </svg>
    </StartButton>
    {tasks.map(({ name, Icon, framed, stack = 0, active }) => (
      <TaskSlot key={name}>
        <TaskButton $framed={framed} $active={active} aria-label={name}>
          <Icon />
        </TaskButton>
        {Array.from({ length: stack }, (_, i) => (
          <StackEdge key={i} />
        ))}
      </TaskSlot>
    ))}
    <Tray>
      <DesktopLabel>Desktop</DesktopLabel>
      <MoreMark>»</MoreMark>
      <svg width="9" height="5" fill="#fff" stroke="#456">
        <path d="M0.500 4.500h8L4.500 0.500z" />
      </svg>
      <svg width="17" height="16" viewBox="0 0 17 16" fill="none" stroke="#fff" strokeWidth="1.500">
        <path d="M5 4h11v8H5zM7 15h7M10.500 12v3" stroke="#3c4c5c" strokeWidth="3" />
        <path d="M5 4h11v8H5zM7 15h7M10.500 12v3" />
        <path d="M1 1v4h4V1M3 5v8h2" />
      </svg>
      <Clock>
        12:14 PM
        <br />
        3/10/2016
      </Clock>
      <ShowDesktop aria-label="Show desktop" />
    </Tray>
  </Taskbar>
);

const App = () => (
  <>
    <GlobalStyle />
    <Desktop>
      <BrowserChrome />
      <Viewport>
        <EmployeePage />
        <Footer>
          <p>Copyright(c) 2006-2007 Employee Benefit Specialists, Inc. All rights reserved.</p>
          <Brand>
            <LogoMark size={32} core="#b8b020" />
            <span>
              <b>WORK</b>TERRA
            </span>
          </Brand>
        </Footer>
        <Backdrop>
          <DialogFrame $width={745}>
            <DialogBox $minHeight={499} role="dialog" aria-label="Learn about benefits">
              <Artwork x={278} y={279} />
              <DialogHeader $line="#98c43c" $size={13}>
                <h2>Learn about Income Protection benefits</h2>
                <button aria-label="Close">
                  <X size={18} strokeWidth={2.800} color="#555" />
                </button>
              </DialogHeader>
              <LearnBody>This content failed to load.</LearnBody>
            </DialogBox>
          </DialogFrame>
        </Backdrop>
        <Backdrop $top={303}>
          <DialogFrame $width={340}>
            <DialogBox role="alertdialog" aria-label="Error">
              <DialogHeader $line="#7a982c" $size={12}>
                <h2>ERROR</h2>
              </DialogHeader>
              <ErrorBody>
                <ErrorIcon />
                <p>
                  Server encountered an internal error.
                  <br />
                  Please contact your administrator.
                </p>
              </ErrorBody>
              <ErrorFooter>
                <OkButton>OK</OkButton>
              </ErrorFooter>
            </DialogBox>
          </DialogFrame>
        </Backdrop>
      </Viewport>
      <WindowsTaskbar />
    </Desktop>
  </>
);

export default App;
